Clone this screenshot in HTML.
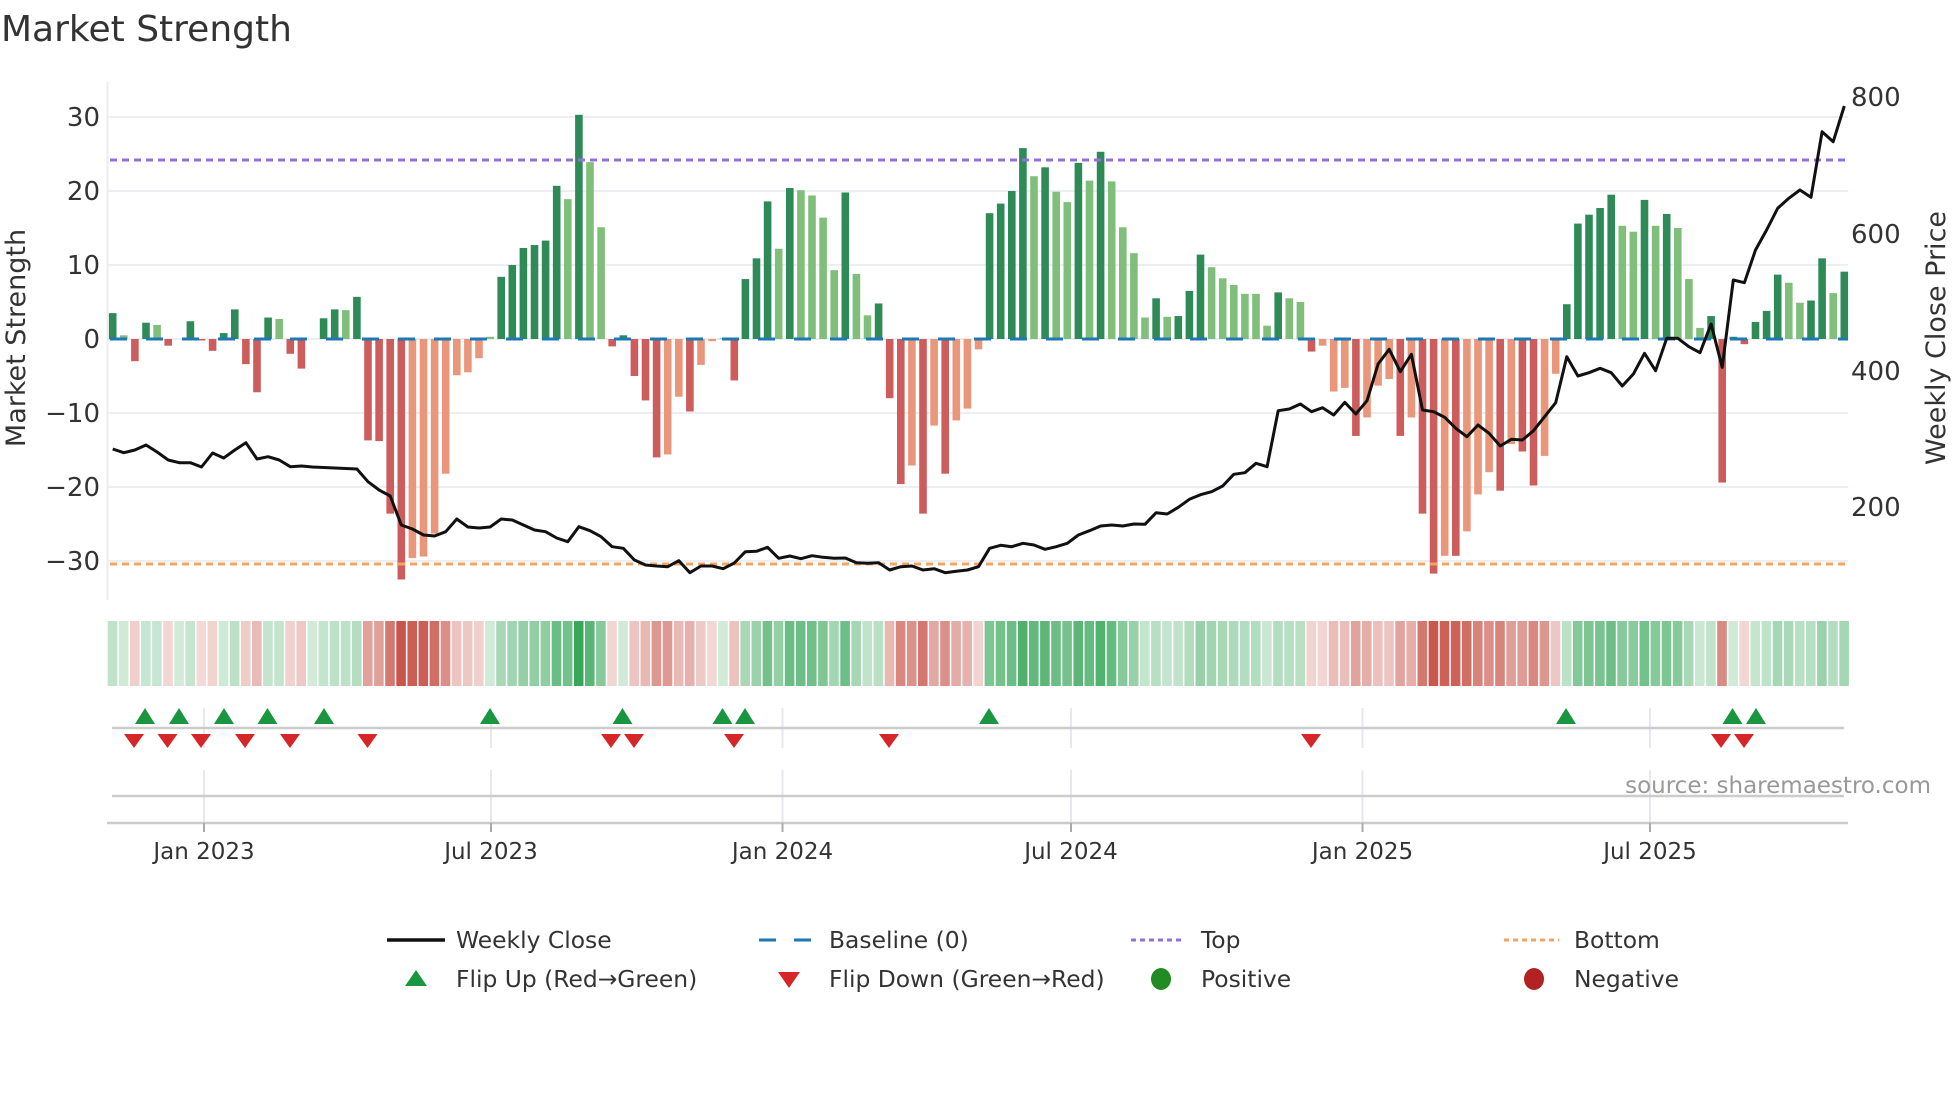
<!DOCTYPE html>
<html><head><meta charset="utf-8"><style>
html,body{margin:0;padding:0;background:#fff;}
svg{display:block;font-family:"DejaVu Sans","Liberation Sans",sans-serif;}
</style></head><body>
<svg id="s" width="1960" height="1102" viewBox="0 0 1960 1102" xmlns="http://www.w3.org/2000/svg">
<text x="1" y="41" font-size="36" fill="#333">Market Strength</text>
<g id="grid" stroke="#eceef3" stroke-width="2"></g>
<line x1="107.5" y1="82" x2="107.5" y2="600" stroke="#eceef3" stroke-width="2"/>
<g font-size="26" fill="#333" text-anchor="end">
<text x="100" y="126">30</text><text x="100" y="200">20</text><text x="100" y="274">10</text>
<text x="100" y="348">0</text><text x="100" y="422">−10</text><text x="100" y="496">−20</text><text x="100" y="570">−30</text>
</g>
<g font-size="26" fill="#333">
<text x="1851" y="106">800</text><text x="1851" y="243">600</text><text x="1851" y="380">400</text><text x="1851" y="516">200</text>
</g>
<text transform="translate(25,338) rotate(-90)" font-size="27" fill="#333" text-anchor="middle">Market Strength</text>
<text transform="translate(1945,338) rotate(-90)" font-size="27" fill="#333" text-anchor="middle">Weekly Close Price</text>
<g id="bars"></g>
<line x1="110" y1="339" x2="1848" y2="339" stroke="#1f77b4" stroke-width="3" stroke-dasharray="17 19"/>
<line x1="110" y1="160" x2="1848" y2="160" stroke="#9370db" stroke-width="3" stroke-dasharray="7 5"/>
<line x1="110" y1="564" x2="1848" y2="564" stroke="#f4a460" stroke-width="3" stroke-dasharray="7 5"/>
<polyline id="price" fill="none" stroke="#111" stroke-width="3" stroke-linejoin="round"/>
<g id="heat"></g>
<g stroke="#e6e8ef" stroke-width="2">
<line x1="204" y1="708" x2="204" y2="748"/><line x1="491" y1="708" x2="491" y2="748"/><line x1="782.5" y1="708" x2="782.5" y2="748"/><line x1="1071" y1="708" x2="1071" y2="748"/><line x1="1362.5" y1="708" x2="1362.5" y2="748"/><line x1="1650" y1="708" x2="1650" y2="748"/>
<line x1="204" y1="770" x2="204" y2="822"/><line x1="491" y1="770" x2="491" y2="822"/><line x1="782.5" y1="770" x2="782.5" y2="822"/><line x1="1071" y1="770" x2="1071" y2="822"/><line x1="1362.5" y1="770" x2="1362.5" y2="822"/><line x1="1650" y1="770" x2="1650" y2="822"/>
</g>
<line x1="112" y1="728" x2="1844" y2="728" stroke="#ccc" stroke-width="2.5"/>
<line x1="112" y1="796" x2="1844" y2="796" stroke="#ccc" stroke-width="2.5"/>
<line x1="107" y1="823" x2="1848" y2="823" stroke="#ccc" stroke-width="2.5"/>
<g stroke="#aaa" stroke-width="2">
<line x1="204" y1="823" x2="204" y2="832"/><line x1="491" y1="823" x2="491" y2="832"/><line x1="782.5" y1="823" x2="782.5" y2="832"/><line x1="1071" y1="823" x2="1071" y2="832"/><line x1="1362.5" y1="823" x2="1362.5" y2="832"/><line x1="1650" y1="823" x2="1650" y2="832"/>
</g>
<g id="marks"></g>
<text x="1931" y="793" font-size="23" fill="#999" text-anchor="end">source: sharemaestro.com</text>
<g font-size="23" fill="#333" text-anchor="middle">
<text x="204" y="859">Jan 2023</text><text x="491" y="859">Jul 2023</text><text x="782.5" y="859">Jan 2024</text><text x="1071" y="859">Jul 2024</text><text x="1362.5" y="859">Jan 2025</text><text x="1650" y="859">Jul 2025</text>
</g>
<g font-size="23.4" fill="#333">
<line x1="387" y1="940" x2="445" y2="940" stroke="#111" stroke-width="3.5"/>
<text x="456" y="948">Weekly Close</text>
<line x1="759" y1="940" x2="812" y2="940" stroke="#1f77b4" stroke-width="3" stroke-dasharray="17 18"/>
<text x="829" y="948">Baseline (0)</text>
<line x1="1131" y1="940" x2="1185" y2="940" stroke="#9370db" stroke-width="3" stroke-dasharray="5 4"/>
<text x="1201" y="948">Top</text>
<line x1="1504" y1="940" x2="1559" y2="940" stroke="#f4a460" stroke-width="3" stroke-dasharray="5 4"/>
<text x="1574" y="948">Bottom</text>
<polygon points="405,986 427,986 416,970" fill="#1a9641"/>
<text x="456" y="987">Flip Up (Red→Green)</text>
<polygon points="778,972 800,972 789,988" fill="#d62728"/>
<text x="829" y="987">Flip Down (Green→Red)</text>
<ellipse cx="1161" cy="979" rx="10" ry="11" fill="#228b22"/>
<text x="1201" y="987">Positive</text>
<ellipse cx="1534" cy="979" rx="10" ry="11" fill="#b22222"/>
<text x="1574" y="987">Negative</text>
</g>
</svg>
<script>
var D=[[3.5,'D'],[0.5,'L'],[-3,'R'],[2.2,'D'],[1.9,'L'],[-0.9,'R'],[0,'L'],[2.4,'D'],[-0.2,'R'],[-1.6,'R'],[0.8,'D'],[4,'D'],[-3.4,'R'],[-7.2,'R'],[2.9,'D'],[2.7,'L'],[-2,'R'],[-4,'R'],[0,'L'],[2.8,'D'],[4,'D'],[3.9,'L'],[5.7,'D'],[-13.7,'R'],[-13.8,'R'],[-23.6,'R'],[-32.5,'R'],[-29.6,'S'],[-29.4,'S'],[-26.3,'S'],[-18.2,'S'],[-4.9,'S'],[-4.5,'S'],[-2.6,'S'],[0.3,'L'],[8.4,'D'],[10,'D'],[12.3,'D'],[12.7,'D'],[13.3,'D'],[20.7,'D'],[18.9,'L'],[30.3,'D'],[23.9,'L'],[15.1,'L'],[-1,'R'],[0.5,'D'],[-5,'R'],[-8.3,'R'],[-16,'R'],[-15.6,'S'],[-7.8,'S'],[-9.8,'R'],[-3.5,'S'],[-0.3,'S'],[0.1,'L'],[-5.6,'R'],[8.1,'D'],[10.9,'D'],[18.6,'D'],[12.2,'L'],[20.4,'D'],[20.1,'L'],[19.4,'L'],[16.4,'L'],[9.3,'L'],[19.8,'D'],[8.8,'L'],[3.2,'L'],[4.8,'D'],[-8,'R'],[-19.6,'R'],[-17.1,'S'],[-23.6,'R'],[-11.7,'S'],[-18.2,'R'],[-11,'S'],[-9.4,'S'],[-1.4,'S'],[17,'D'],[18.3,'D'],[20,'D'],[25.8,'D'],[22,'L'],[23.2,'D'],[19.9,'L'],[18.5,'L'],[23.8,'D'],[21.4,'L'],[25.3,'D'],[21.3,'L'],[15.1,'L'],[11.6,'L'],[2.9,'L'],[5.5,'D'],[3,'L'],[3.1,'D'],[6.5,'D'],[11.4,'D'],[9.7,'L'],[8.2,'L'],[7.3,'L'],[6.1,'L'],[6.1,'L'],[1.8,'L'],[6.3,'D'],[5.5,'L'],[5,'L'],[-1.7,'R'],[-0.9,'S'],[-7.1,'S'],[-6.6,'S'],[-13.1,'R'],[-10.6,'S'],[-6.3,'S'],[-5.4,'S'],[-13.1,'R'],[-10.6,'S'],[-23.6,'R'],[-31.7,'R'],[-29.3,'S'],[-29.3,'R'],[-26,'S'],[-21,'S'],[-18,'S'],[-20.5,'R'],[-14.2,'S'],[-15.2,'R'],[-19.8,'R'],[-15.8,'S'],[-4.7,'S'],[4.7,'D'],[15.6,'D'],[16.8,'D'],[17.7,'D'],[19.5,'D'],[15.3,'L'],[14.5,'L'],[18.8,'D'],[15.3,'L'],[16.9,'D'],[15,'L'],[8.1,'L'],[1.5,'L'],[3.1,'D'],[-19.4,'R'],[0.3,'D'],[-0.7,'R'],[2.3,'D'],[3.8,'D'],[8.7,'D'],[7.6,'L'],[4.9,'L'],[5.2,'D'],[10.9,'D'],[6.2,'L'],[9.1,'D']];
var P=[449,452.7,450,445,452,460,462.7,462.7,467,453,458,450,442.7,459,456.7,460,466.7,466,467,467.5,468,468.5,469,481.7,490,496,525,529,535,536,531.7,519,527,528,527,519,520,525,530,531.7,538,541.7,526.7,530.7,536.7,546.7,548.3,560,565,566,566.7,560.7,572.7,566,566,568.7,563,551.7,551.3,547.3,558.3,556,558.7,555.7,557.3,558.3,558,562.7,563.3,562.7,570,566.7,566,570,568.7,572.7,571.3,570,566.7,548.3,545.3,546.7,543.3,545,549.3,546.7,543.3,535,530.7,526,525,526,524,524.3,512.7,514,507.3,499.3,494.7,491.7,486,474.3,472.7,463.3,466.7,410.7,409,404,411.7,407.7,415,402.3,414,400.7,364,349.3,371.7,354.3,410,411.7,417.3,428.3,436.7,425,433.3,446,439.3,440,430.7,416.7,402.7,356.7,376,372.7,368.3,372.7,386,374,353.3,370.7,338.3,338.3,346.7,352.7,324,367.3,280,282.7,250,230,208.3,198.3,190,197.3,131.7,141.7,106];
var NS='http://www.w3.org/2000/svg';
function el(t,a,p){var e=document.createElementNS(NS,t);for(var k in a)e.setAttribute(k,a[k]);document.getElementById(p).appendChild(e);return e;}
var grid=[117,191,265,339,413,487,561];
grid.forEach(function(y){el('line',{x1:107,x2:1848,y1:y,y2:y},'grid');});
var col={D:'#2e8b57',L:'#7fbf7b',R:'#cd5c5c',S:'#e9967a'};
var pts=[];
for(var i=0;i<D.length;i++){
 var x=112.7+11.1*i,v=D[i][0],h=Math.abs(v)*7.4;
 if(h>0.3) el('rect',{x:x-3.8,width:7.6,y:v>0?339-h:339,height:h,fill:col[D[i][1]]},'bars');
 var t=0.22+0.78*Math.min(1,Math.abs(v)/32);
 var c=v>=0?'rgb(49,163,84)':'rgb(200,85,75)';
 el('rect',{x:x-5,width:9.6,y:621,height:65,fill:c,'fill-opacity':t.toFixed(2)},'heat');
 pts.push(x.toFixed(1)+','+P[i]);
}
document.getElementById('price').setAttribute('points',pts.join(' '));
var up=[145,179,224,267.5,324,490,622.5,722.5,745,989,1566,1732.5,1756];
var dn=[134,167.5,201,245,290,367.5,611,634,734,889,1311,1721,1744];
up.forEach(function(x){el('polygon',{points:(x-10)+',724 '+(x+10)+',724 '+x+',708',fill:'#1a9641'},'marks');});
dn.forEach(function(x){el('polygon',{points:(x-10)+',734 '+(x+10)+',734 '+x+',748',fill:'#d62728'},'marks');});
</script>
</body></html>
